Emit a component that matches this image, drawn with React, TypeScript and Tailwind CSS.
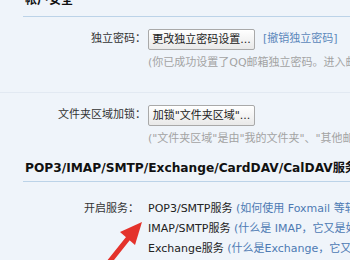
import React from 'react';

const cjk = 'font-["DejaVu_Sans","Noto_Sans_CJK_SC",sans-serif]';

function Row({ label, children, className = '' }: { label: string; children: React.ReactNode; className?: string }) {
  return (
    <div className={`flex items-center ${className}`}>
      <div className="w-[125px] shrink-0 text-right text-[#333] pr-[2px]">{label}</div>
      <div className="flex items-center gap-[8px] whitespace-nowrap">{children}</div>
    </div>
  );
}

function Btn({ children }: { children: React.ReactNode }) {
  return (
    <button className="h-[21px] w-[107px] rounded-[2px] border border-[#a9a9a9] bg-gradient-to-b from-white to-[#e9e9e9] text-[11px] text-[#222] leading-none shadow-[inset_0_1px_0_#fff]">
      {children}
    </button>
  );
}

export default function App() {
  return (
    <div className={`relative w-[350px] h-[260px] overflow-hidden bg-[#eff4fa] text-[11px] ${cjk}`}>
      <div className="pl-[23px]">
        <div className="-mt-[7px] h-[24px] border-b border-[#bcd3e8] pl-[2px] text-[12px] font-bold text-[#111] leading-[14px]">
          帐户安全
        </div>

        <Row label="独立密码：" className="mt-[12px]">
          <Btn>更改独立密码设置...</Btn>
          <span className="text-[#5b87bb]">[撤销独立密码]</span>
        </Row>
        <div className="pl-[125px] mt-[5px] whitespace-nowrap text-[#a3a3a3]">
          (你已成功设置了QQ邮箱独立密码。进入邮箱需要输入独立密码)
        </div>

        <div className="mt-[20px] h-px bg-[#e2e9f2] -ml-[23px]" />

        <Row label="文件夹区域加锁：" className="mt-[12px]">
          <Btn>加锁"文件夹区域"...</Btn>
        </Row>
        <div className="pl-[125px] mt-[5px] whitespace-nowrap text-[#a3a3a3]">
          ("文件夹区域"是由"我的文件夹"、"其他邮箱"、"标签"组成)
        </div>

        <div className="mt-[13px] h-[22px] border-b border-[#bcd3e8] pl-[2px] whitespace-nowrap text-[12.2px] font-bold text-[#111] leading-[16px]">
          POP3/IMAP/SMTP/Exchange/CardDAV/CalDAV服务
        </div>

        <div className="mt-[17px] flex">
          <div className="w-[125px] shrink-0 text-right text-[#333] pr-[9px] leading-[20px]">开启服务：</div>
          <div className="flex flex-col whitespace-nowrap leading-[20px] text-[#222]">
            <div>POP3/SMTP服务 <span className="text-[#4d7ab3]">(如何使用 Foxmail 等软件收发邮件？)</span></div>
            <div>IMAP/SMTP服务 <span className="text-[#4d7ab3]">(什么是 IMAP，它又是如何设置？)</span></div>
            <div>Exchange服务 <span className="text-[#4d7ab3]">(什么是Exchange，它又是如何设置？)</span></div>
          </div>
        </div>
      </div>

      <svg className="absolute left-0 top-0" width="350" height="260" viewBox="0 0 350 260">
        <line x1="106" y1="266" x2="130" y2="236" stroke="#e4322b" strokeWidth="5" strokeLinecap="round" />
        <polygon points="142,222 120,232 135,245" fill="#e4322b" />
      </svg>
    </div>
  );
}
